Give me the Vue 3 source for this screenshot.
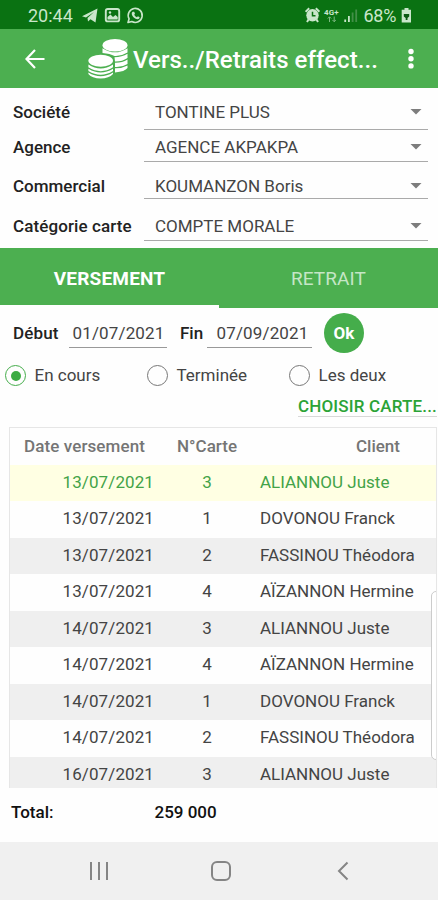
<script setup>
const fields = [
  { label: 'Société', value: 'TONTINE PLUS', cls: 'f1' },
  { label: 'Agence', value: 'AGENCE AKPAKPA', cls: 'f2' },
  { label: 'Commercial', value: 'KOUMANZON Boris', cls: 'f3' },
  { label: 'Catégorie carte', value: 'COMPTE MORALE', cls: 'f4' },
]
const rows = [
  ['13/07/2021', 3, 'ALIANNOU Juste'],
  ['13/07/2021', 1, 'DOVONOU Franck'],
  ['13/07/2021', 2, 'FASSINOU Théodora'],
  ['13/07/2021', 4, 'AÏZANNON Hermine'],
  ['14/07/2021', 3, 'ALIANNOU Juste'],
  ['14/07/2021', 4, 'AÏZANNON Hermine'],
  ['14/07/2021', 1, 'DOVONOU Franck'],
  ['14/07/2021', 2, 'FASSINOU Théodora'],
  ['16/07/2021', 3, 'ALIANNOU Juste'],
]
</script>

<template>
  <div class="screen">
    <div class="status">
      <span class="clock">20:44</span>
      <svg class="st-left" width="64" height="18" viewBox="0 0 64 18">
        <path d="M0 9.300L15.500 1.500L13.500 15.500L8.500 12.300L6 14.500L5.500 11L12 5L4 10.500Z" fill="#c9e6ca" />
        <rect x="23.800" y="2" width="13.400" height="12.400" rx="2" fill="none" stroke="#c9e6ca" stroke-width="1.900" />
        <path d="M25.500 12.500V10L28.500 7.500L31 10L33.500 8L35.700 10V12.500Z" fill="#c9e6ca" />
        <circle cx="28" cy="5.500" r="1.200" fill="#c9e6ca" />
        <path d="M46 15.500L47.100 11.800A7 7 0 1 1 49.800 14.500Z" fill="none" stroke="#c9e6ca" stroke-width="1.600" stroke-linejoin="round" />
        <path d="M50.800 4.700L52.200 4.800L53 6.700L52.200 7.800Q53 9.500 54.900 10.300L55.900 9.300L57.700 10.200Q57.500 12.500 55.200 12.300Q50.500 11 49.700 7Q49.700 5.300 50.800 4.700Z" fill="#c9e6ca" />
      </svg>
      <svg class="st-right" width="55" height="18" viewBox="0 0 55 18">
        <path d="M3.500 12.500L2 15M11.500 12.500L13 15M.6 4.800L4.200 1.300M10.800 1.300L14.400 4.800" fill="none" stroke="#c9e6ca" stroke-width="2" />
        <circle cx="7.500" cy="8.300" r="6.200" fill="#c9e6ca" />
        <path d="M7.500 4.800V8.700H10.500" fill="none" stroke="#0a7212" stroke-width="1.500" />
        <text x="19" y="7.500" font-size="8" font-weight="700" textLength="14.500" fill="#c9e6ca">4G+</text>
        <path d="M24.500 15V10M22.800 11.500L24.500 9.800L26.200 11.500M29.200 9.500V14.700M27.500 13L29.200 14.700L30.900 13" fill="none" stroke="#7fb983" stroke-width="1" />
        <path d="M40.200 15V12.500M43.900 15V9" stroke="#c9e6ca" stroke-width="1.800" />
        <path d="M47.600 15V5.500M51.200 15V2.500" stroke="#438f48" stroke-width="1.800" />
      </svg>
      <span class="pct">68%</span>
      <svg class="batt" width="11" height="15" viewBox="0 0 11 15">
        <path d="M3.500 0H7.500V1.700H10V14.500H.7V1.700H3.500Z" fill="#c9e6ca" />
        <path d="M2.800 6H8.200V8.500L6.500 10V12H4.700V10L2.800 8.500Z" fill="#0a5a12" />
      </svg>
    </div>

    <header class="bar">
      <svg class="back" width="20" height="20" viewBox="0 0 20 20">
        <path d="M19.500 10H2M10 1L1.500 10L10 19" fill="none" stroke="#fff" stroke-width="2.200" />
      </svg>
      <svg class="coins" width="40" height="42" viewBox="0 0 40 42" fill="#fff">
        <ellipse cx="27" cy="7.300" rx="12.500" ry="6.300" />
        <path d="M14.500 10.200Q27 18.500 39.500 10.200V14.500Q33 18.500 26.500 18Q22 15.500 14.500 15Z" />
        <path d="M26.500 19.200Q34 19.200 39.500 15.800V20Q34 23.700 27 23.500Z" />
        <path d="M27 24.800Q34 25 39.500 21.500V26Q34 29.500 27 29Z" />
        <path d="M27 30.300Q34 30.500 39.500 27.500V30Q37 33.500 27 34.500Z" />
        <ellipse cx="12.700" cy="22.800" rx="12.300" ry="6" />
        <path d="M.4 26.500Q12.700 34.500 25 26.500V29.300Q12.700 37 .4 29.300Z" />
        <path d="M.4 30.800Q12.700 38.300 25 30.800V33Q12.700 40.500 .4 33Z" />
        <path d="M.4 34.500Q12.700 42 25 34.500V36Q21 40.300 12.700 40.500Q4 40.300 .4 36Z" />
      </svg>
      <h1>Vers../Retraits effect...</h1>
      <svg class="more" width="6" height="22" viewBox="0 0 6 22" fill="#fff">
        <circle cx="3" cy="3.500" r="2.700" /><circle cx="3" cy="10.700" r="2.700" /><circle cx="3" cy="17.900" r="2.700" />
      </svg>
    </header>

    <section class="form">
      <div v-for="f in fields" :key="f.label" class="field" :class="f.cls">
        <label>{{ f.label }}</label>
        <div class="select">
          <span>{{ f.value }}</span>
          <svg width="12" height="6" viewBox="0 0 12 6"><path d="M.5 0H11.500L6 5.500Z" fill="#7d7d7d" /></svg>
        </div>
      </div>
    </section>

    <nav class="tabs">
      <div class="tab active">VERSEMENT</div>
      <div class="tab">RETRAIT</div>
    </nav>

    <section class="dates">
      <b class="debut">Début</b><span class="date d1">01/07/2021</span>
      <b class="fin">Fin</b><span class="date d2">07/09/2021</span>
      <button>Ok</button>
    </section>

    <section class="radios">
      <div class="radio on"><i></i><span>En cours</span></div>
      <div class="radio"><i></i><span>Terminée</span></div>
      <div class="radio"><i></i><span>Les deux</span></div>
    </section>

    <div class="choose"><a>CHOISIR CARTE...</a></div>

    <div class="table">
      <div class="tr head">
        <span>Date versement</span><span>N°Carte</span><span>Client</span>
      </div>
      <div v-for="(r, i) in rows" :key="i" class="tr" :class="{ sel: i === 0, alt: i > 0 && i % 2 === 0 }">
        <span>{{ r[0] }}</span><span>{{ r[1] }}</span><span>{{ r[2] }}</span>
      </div>
      <div class="edge"></div>
    </div>

    <div class="total"><b class="t1">Total:</b><b>259 000</b></div>

    <footer>
      <svg width="20" height="20" viewBox="0 0 20 20"><path d="M2 1V19M10 1V19M18 1V19" stroke="#858585" stroke-width="2" /></svg>
      <svg width="20" height="20" viewBox="0 0 20 20"><rect x="1" y="1" width="18" height="18" rx="5" fill="none" stroke="#858585" stroke-width="2" /></svg>
      <svg width="12" height="20" viewBox="0 0 12 20"><path d="M10.500 1.500L2 10L10.500 18.500" fill="none" stroke="#858585" stroke-width="2" /></svg>
    </footer>
  </div>
</template>

<style>
body { margin: 0; background: #fff; }
</style>

<style scoped>
.screen { width: 438px; height: 900px; overflow: hidden; background: #fefefe; font-family: Roboto, "Liberation Sans", sans-serif; font-size: 17px; color: #444; display: flex; flex-direction: column; white-space: nowrap; }
.screen > * { flex: none; box-sizing: border-box; }
svg { display: block; flex: none; }

.status { height: 29px; background: #0a7212; color: #c9e6ca; display: flex; align-items: flex-start; padding-left: 28px; }
.clock { width: 53.500px; line-height: 22px; padding-top: 5px; font-size: 18px; }
.st-left { margin-top: 7px; }
.st-right { margin: 7px 0 0 159px; }
.pct { width: 35px; margin-left: 4px; padding-top: 5px; line-height: 22px; font-size: 18px; letter-spacing: -.3px; }
.batt { margin: 8px 0 0 2px; }

.bar { height: 59px; background: #4caf50; display: flex; align-items: center; padding-left: 25px; }
.coins { margin-left: 43px; }
h1 { margin: 2px 0 0 5px; width: 251px; font-size: 24px; letter-spacing: .05px; line-height: 30px; font-weight: 500; color: #fff; }
.more { margin-left: 24px; }

.form { height: 160px; }
.field { display: grid; grid-template-columns: 131px 284px; box-sizing: border-box; padding-left: 13px; line-height: 20px; }
label, b { font-weight: 500; color: #222; }
.select { box-sizing: border-box; border-bottom: 1px solid #aaa; display: flex; justify-content: space-between; padding: 0 6px 0 11px; }
.select svg { margin-top: 7px; }
.field label, .select { padding-top: var(--t); }
.f1 { height: 42px; --t: 14px; }
.f2 { height: 32px; --t: 7px; }
.f3 { height: 37px; --t: 14px; }
.f4 { height: 42px; --t: 17px; }
.f4 label { letter-spacing: .1px; }

.tabs { height: 60px; background: #4caf50; display: flex; }
.tab { width: 219px; height: 60px; box-sizing: border-box; line-height: 61px; text-align: center; font-size: 19px; color: #c5e6c6; letter-spacing: .1px; }
.tab.active { color: #fff; font-weight: 700; letter-spacing: .2px; border-bottom: 3px solid #fefefe; }

.dates { height: 49px; display: flex; align-items: flex-start; padding: 5px 0 0 13px; line-height: 20px; }
.dates b { padding-top: 10px; }
.debut { width: 56px; letter-spacing: .15px; }
.fin { width: 27px; margin-left: 13px; }
.date { box-sizing: border-box; height: 35px; padding-top: 10px; text-align: center; border-bottom: 1px solid #999; letter-spacing: .15px; }
.d1 { width: 98px; padding-left: 1px; }
.d2 { width: 105px; padding-left: 6px; }
button { margin: 0 0 0 12px; padding: 0; width: 40px; height: 40px; border: 0; border-radius: 50%; background: #45ad4b; color: #fff; font: 700 17px/39px Roboto, sans-serif; }

.radios { height: 37px; display: grid; grid-template-columns: 142px 142px 140px; padding-left: 5px; }
.radio { display: flex; height: 37px; align-items: center; gap: 8.500px; }
.radio span { margin-top: -1px; }
.radio i { box-sizing: border-box; width: 21px; height: 21px; border: 1.5px solid #777; border-radius: 50%; display: grid; place-items: center; }
.radio.on i { border-color: #45ad4b; }
.radio.on i::after { content: ""; width: 10px; height: 10px; border-radius: 50%; background: #3cab43; }

.choose { height: 33px; display: flex; justify-content: flex-end; align-items: flex-start; padding: 2px 1px 0 0; color: #2ba336; font-weight: 500; line-height: 20px; letter-spacing: .17px; }
.choose a { border-bottom: 1px solid #d8d8d8; }

.table { position: relative; height: 361px; margin: 0 1px 0 9px; border: 1px solid #e6e6e6; border-bottom: 0; overflow: hidden; }
.tr { height: 36.500px; line-height: 34.500px; display: grid; grid-template-columns: 144px 106px 176px; }
.tr span:nth-child(1) { text-align: right; letter-spacing: .1px; }
.tr span:nth-child(2) { text-align: center; }
.tr.alt { background: #efefef; }
.tr.sel { background: #ffffe3; color: #43a348; }
.tr.head { font-weight: 500; color: #757575; line-height: 37px; }
.tr.head span:nth-child(1) { padding-right: 9px; }
.tr.head span:nth-child(3) { text-align: right; padding-right: 36px; }
.edge { position: absolute; right: -5px; top: 163px; width: 8px; height: 167px; border: 1px solid #ccc; border-radius: 6px; background: #fff; }

.total { height: 54px; display: flex; line-height: 20px; padding: 14px 0 0 11px; }
.total b { color: #111; }
.t1 { width: 143.500px; }

footer { height: 58px; background: #f0f0f0; display: flex; align-items: center; padding-left: 89px; gap: 102px; }
footer svg:last-child { margin-left: 4px; }
</style>
